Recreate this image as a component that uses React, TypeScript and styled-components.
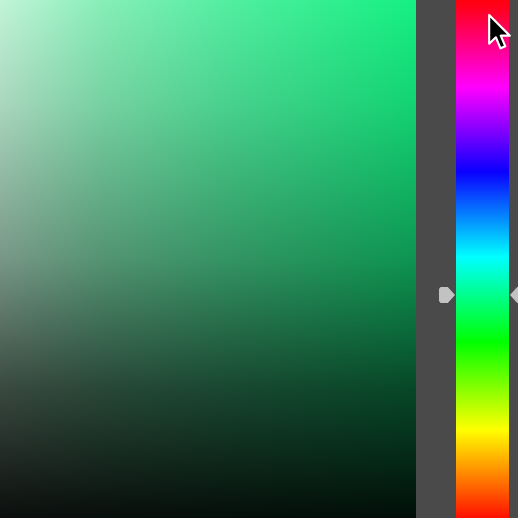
import React from "react";
import styled, { createGlobalStyle } from "styled-components";

const GlobalStyle = createGlobalStyle`
  html, body {
    margin: 0;
    padding: 0;
    background: #4a4a4a;
    font-family: "Liberation Sans", Arial, sans-serif;
  }
`;

const HUE = 150;

const Picker = styled.div`
  width: 518px;
  height: 518px;
  display: flex;
  flex-direction: row;
  overflow: hidden;
  position: relative;
  background: #4a4a4a;
`;

const SatValArea = styled.div<{ $hue: number }>`
  width: 416px;
  height: 100%;
  flex-shrink: 0;
  background:
    linear-gradient(
      to bottom,
      rgba(0, 0, 0, 0) 0%,
      rgba(0, 0, 0, 0.12) 20%,
      rgba(0, 0, 0, 0.38) 50%,
      rgba(0, 0, 0, 0.7) 75%,
      rgba(0, 0, 0, 0.94) 100%
    ),
    linear-gradient(
      to right,
      #c2f4d8 0%,
      #86eeb8 25%,
      #52eea0 55%,
      hsl(${(p) => p.$hue}, 88%, 51%) 100%
    );
`;

const HueColumn = styled.div`
  position: relative;
  flex: 1;
  display: flex;
  padding: 0 9px 0 40px;
  background: #4a4a4a;
`;

const HueBar = styled.div`
  flex: 1;
  background: linear-gradient(
    to bottom,
    #ff0010 0px,
    #ff0018 6px,
    #ff00ff 88px,
    #0a00ff 172px,
    #00ffff 257px,
    #00ff00 342px,
    #ffff00 430px,
    #ff1000 518px
  );
`;

const Marker = styled.div<{ $side: "left" | "right" }>`
  position: absolute;
  top: 287px;
  width: 16px;
  height: 16px;
  background: #c2c2c2;
  ${(p) =>
    p.$side === "left"
      ? `left: 23px; clip-path: polygon(0 12%, 10% 0, 55% 0, 100% 50%, 55% 100%, 10% 100%, 0 88%);`
      : `left: 94px; clip-path: polygon(100% 12%, 90% 0, 45% 0, 0 50%, 45% 100%, 90% 100%, 100% 88%);`}
`;

const Cursor = styled.svg`
  position: absolute;
  left: 487px;
  top: 13px;
  width: 27px;
  height: 40px;
  pointer-events: none;
`;

export default function App() {
  return (
    <>
      <GlobalStyle />
      <Picker>
        <SatValArea $hue={HUE} />
        <HueColumn>
          <HueBar />
          <Marker $side="left" />
          <Marker $side="right" />
        </HueColumn>
        <Cursor viewBox="0 0 20 30">
          <path
            d="M1.5 1.5 L1.5 23 L6.5 18.2 L10 26.5 L13.6 25 L10.2 17 L17 17 Z"
            fill="#000"
            stroke="#fff"
            strokeWidth="1.6"
            strokeLinejoin="round"
          />
        </Cursor>
      </Picker>
    </>
  );
}
